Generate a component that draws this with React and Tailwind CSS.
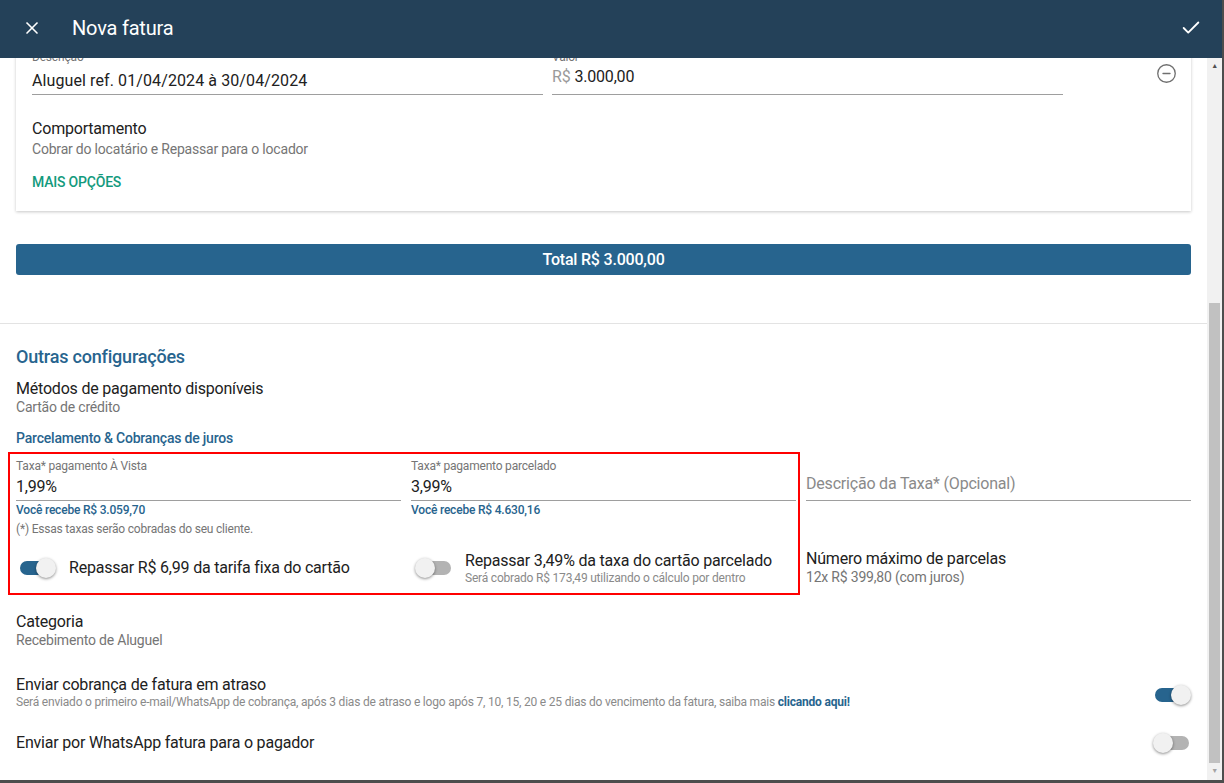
import React from "react";
import { X, Check, CircleMinus } from "lucide-react";

function Toggle({ on }) {
  return (
    <div className="relative w-[36px] h-[20px] flex items-center shrink-0">
      <div className={`w-[34px] h-[14px] rounded-full ${on ? "bg-[#27648e]" : "bg-[#b3b3b3]"}`} />
      <div
        className={`absolute top-0 w-[20px] h-[20px] rounded-full bg-[#f1f1f1] shadow-[0_1px_3px_rgba(0,0,0,0.45)] ${on ? "left-[16px]" : "left-[-2px]"}`}
      />
    </div>
  );
}

function Item({ title, sub }) {
  return (
    <div>
      <div className="text-[16px] leading-[20px] text-[#212121]">{title}</div>
      <div className="text-[14px] leading-[16px] text-[#757575]">{sub}</div>
    </div>
  );
}

export default function App() {
  return (
    <div
      className="w-screen h-screen overflow-hidden bg-[#4d4d4d] tracking-[-0.2px]"
      style={{ fontFamily: "Roboto, 'Noto Sans', sans-serif" }}
    >
      <div className="w-[1222px] h-[780px] flex flex-col bg-white">
        {/* header */}
        <div className="h-[58px] shrink-0 bg-[#244159] flex items-center px-[22px] pb-[2px] text-white relative z-10">
          <X size={20} strokeWidth={2} />
          <div className="ml-[30px] text-[20px] font-normal">Nova fatura</div>
          <div className="ml-auto mr-[-2px]">
            <Check size={22} strokeWidth={2} />
          </div>
        </div>

        <div className="flex flex-1 min-h-0">
          <div className="flex-1 overflow-hidden">
            <div className="-mt-[9px]">
              {/* card */}
              <div className="mx-4 bg-white shadow-[0_1px_3px_rgba(0,0,0,0.22)] px-4 pb-[20px]">
                <div className="flex items-start">
                  <div className="w-[511px]">
                    <div className="text-[12px] leading-[16px] text-[#757575]">Descrição</div>
                    <div className="h-[30px] flex items-center pt-[2px] border-b border-[#9e9e9e] text-[16px] text-[#212121] tracking-[0.1px]">
                      Aluguel ref. 01/04/2024 à 30/04/2024
                    </div>
                  </div>
                  <div className="w-[511px] ml-[9px]">
                    <div className="text-[12px] leading-[16px] text-[#757575]">Valor</div>
                    <div className="h-[30px] flex items-center border-b border-[#9e9e9e] text-[16px] text-[#212121] pb-[6px]">
                      <span className="text-[#9a9a9a] mr-[4px]">R$</span>3.000,00
                    </div>
                  </div>
                  <div className="ml-auto mt-[14px] mr-[-2px] text-[#6f6f6f]">
                    <CircleMinus size={21} strokeWidth={1.5} />
                  </div>
                </div>
                <div className="mt-[24px]">
                  <div className="text-[16px] leading-[20px] text-[#212121]">Comportamento</div>
                  <div className="mt-[1px] text-[14px] leading-[18px] text-[#757575]">
                    Cobrar do locatário e Repassar para o locador
                  </div>
                </div>
                <div className="mt-[15px] text-[14px] leading-[18px] font-medium text-[#139a7d]">MAIS OPÇÕES</div>
              </div>

              {/* total */}
              <div className="mx-4 mt-[33px] h-[31px] rounded-[3px] bg-[#27648e] flex items-center justify-center text-white text-[16px] font-medium">
                Total R$ 3.000,00
              </div>

              <div className="mt-[48px] border-t border-[#e3e3e3]" />

              <div className="px-4 pt-[21px]">
                <div className="text-[18px] leading-[24px] font-medium text-[#27648e]">Outras configurações</div>
                <div className="mt-[10px]">
                  <Item title="Métodos de pagamento disponíveis" sub="Cartão de crédito" />
                </div>
                <div className="mt-[14px] text-[14px] leading-[18px] font-medium text-[#27648e]">
                  Parcelamento &amp; Cobranças de juros
                </div>
              </div>

              {/* fees area */}
              <div className="flex mt-[5px] pl-[8px]">
                <div className="w-[792px] h-[143px] border-2 border-[#ff0000] pl-[6px] pr-[2px] pt-[4px]">
                  <div className="flex gap-[10px]">
                    <div className="w-[385px]">
                      <div className="text-[12px] leading-[16px] text-[#757575]">Taxa* pagamento À Vista</div>
                      <div className="h-[27px] flex items-center border-b border-[#9e9e9e] text-[16px] text-[#212121]">1,99%</div>
                      <div className="mt-[1px] text-[12px] leading-[16px] font-medium text-[#27648e]">Você recebe R$ 3.059,70</div>
                    </div>
                    <div className="w-[385px]">
                      <div className="text-[12px] leading-[16px] text-[#757575]">Taxa* pagamento parcelado</div>
                      <div className="h-[27px] flex items-center border-b border-[#9e9e9e] text-[16px] text-[#212121]">3,99%</div>
                      <div className="mt-[1px] text-[12px] leading-[16px] font-medium text-[#27648e]">Você recebe R$ 4.630,16</div>
                    </div>
                  </div>
                  <div className="mt-[3px] text-[12px] leading-[16px] text-[#757575]">
                    (*) Essas taxas serão cobradas do seu cliente.
                  </div>
                  <div className="flex mt-[11px]">
                    <div className="w-[395px] flex items-center pl-[4px] h-[40px]">
                      <Toggle on />
                      <div className="ml-[13px] text-[16px] text-[#212121]">Repassar R$ 6,99 da tarifa fixa do cartão</div>
                    </div>
                    <div className="flex items-center pl-[6px] h-[40px]">
                      <Toggle />
                      <div className="ml-[12px]">
                        <div className="text-[16px] leading-[20px] text-[#212121]">Repassar 3,49% da taxa do cartão parcelado</div>
                        <div className="text-[12px] leading-[14px] text-[#8a8a8a]">Será cobrado R$ 173,49 utilizando o cálculo por dentro</div>
                      </div>
                    </div>
                  </div>
                </div>

                <div className="w-[385px] ml-[6px] pt-[19px]">
                  <div className="h-[30px] flex items-center pb-[3px] border-b border-[#9e9e9e] text-[16px] text-[#8a8a8a]">
                    Descrição da Taxa* (Opcional)
                  </div>
                  <div className="mt-[48px]">
                    <Item title="Número máximo de parcelas" sub="12x R$ 399,80 (com juros)" />
                  </div>
                </div>
              </div>

              <div className="px-4">
                <div className="mt-[17px]">
                  <Item title="Categoria" sub="Recebimento de Aluguel" />
                </div>
                <div className="mt-[27px] flex items-center">
                  <div>
                    <div className="text-[16px] leading-[20px] text-[#212121]">Enviar cobrança de fatura em atraso</div>
                    <div className="text-[12px] leading-[14px] text-[#8a8a8a]">
                      Será enviado o primeiro e-mail/WhatsApp de cobrança, após 3 dias de atraso e logo após 7, 10, 15, 20 e 25 dias do vencimento da fatura, saiba mais{" "}
                      <span className="font-bold text-[#27648e]">clicando aqui!</span>
                    </div>
                  </div>
                  <div className="ml-auto mt-[6px]">
                    <Toggle on />
                  </div>
                </div>
                <div className="mt-[24px] flex items-center">
                  <div className="text-[16px] leading-[20px] text-[#212121]">Enviar por WhatsApp fatura para o pagador</div>
                  <div className="ml-auto">
                    <Toggle />
                  </div>
                </div>
              </div>
            </div>
          </div>

          {/* scrollbar */}
          <div className="w-[15px] shrink-0 bg-[#f1f1f1] flex flex-col items-center">
            <div className="h-[17px] flex items-center justify-center text-[#505050] text-[7px] leading-none">▲</div>
            <div className="mt-[228px] w-[11px] h-[460px] bg-[#c1c1c1]" />
            <div className="mt-auto h-[17px] flex items-center justify-center text-[#a3a3a3] text-[7px] leading-none">▼</div>
          </div>
        </div>
      </div>
    </div>
  );
}
